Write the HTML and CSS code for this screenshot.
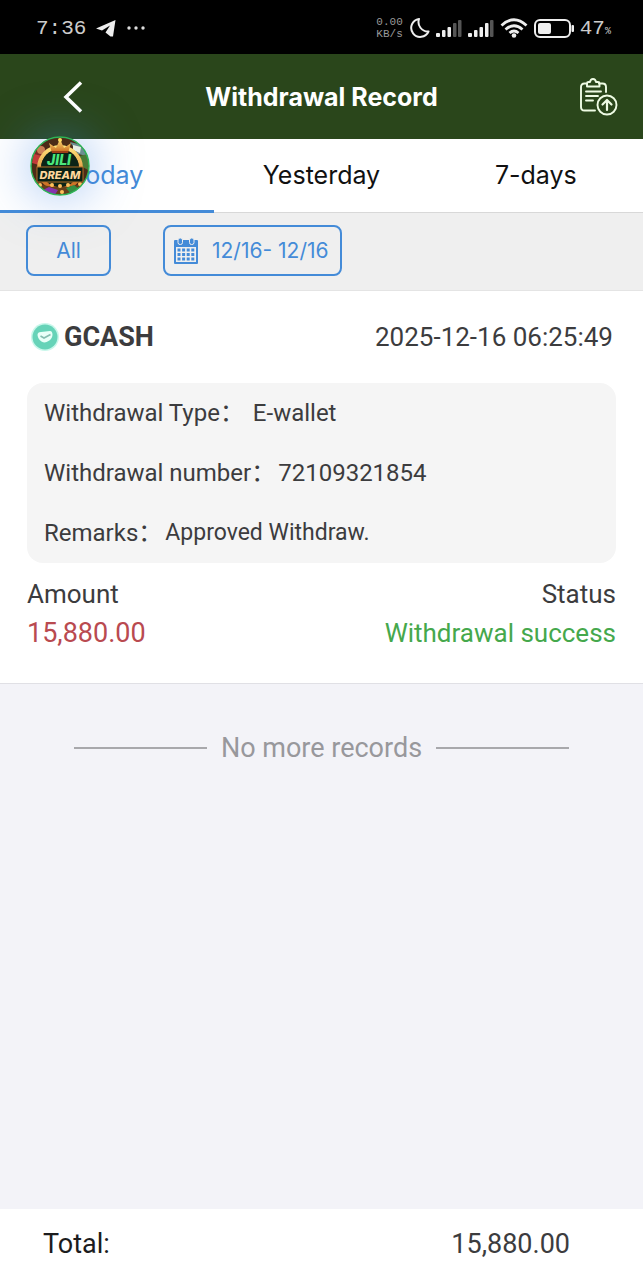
FILE: index.html
```html
<!DOCTYPE html>
<html lang="en">
<head>
    <meta charset="UTF-8">
    <meta name="viewport" content="width=device-width, initial-scale=1.0">
    <title>Withdrawal Record</title>

    <link rel="stylesheet" href="styles.css">

</head>
<body>
    <!-- Status bar -->
    <div class="status">
        <div class="status-side">
            <span class="status-time">7:36</span>
            <svg width="20" height="18" viewBox="0 0 20 18">
                <path d="M0 9.500 19.500 1 17 17.500 14.500 17.500 9.500 13.500 14 6.500 6 11.500Z" fill="#eee"/>
            </svg>
            <svg width="20" height="6" viewBox="0 0 20 6" fill="#ddd">
                <circle cx="3" cy="3" r="1.700"/>
                <circle cx="10" cy="3" r="1.700"/>
                <circle cx="17" cy="3" r="1.700"/>
            </svg>
        </div>
        <div class="status-side status-right">
            <span class="status-net">0.00<br>KB/s</span>
            <svg width="21" height="22" viewBox="0 0 21 22">
                <path d="M10 2A9 9 0 1 0 19.500 14.500 9.500 9.500 0 0 1 10 2Z" fill="none" stroke="#eee" stroke-width="2" stroke-linejoin="round"/>
            </svg>
            <svg width="26" height="18" viewBox="0 0 26 18" fill="#eee">
                <rect y="14" width="4" height="4" rx="1"/>
                <rect x="6" y="11" width="3.500" height="7" rx="1"/>
                <rect x="11.500" y="8" width="3.500" height="10" rx="1"/>
                <rect x="17" y="4" width="3.500" height="14" rx="1" fill="#555"/>
                <rect x="22" y="1" width="3.500" height="17" rx="1" fill="#555"/>
            </svg>
            <svg width="26" height="18" viewBox="0 0 26 18" fill="#eee">
                <rect y="14" width="4" height="4" rx="1"/>
                <rect x="6" y="11" width="3.500" height="7" rx="1"/>
                <rect x="11.500" y="8" width="3.500" height="10" rx="1"/>
                <rect x="17" y="4" width="3.500" height="14" rx="1"/>
                <rect x="22" y="1" width="3.500" height="17" rx="1" fill="#555"/>
            </svg>
            <svg width="28" height="20" viewBox="0 0 28 20" fill="none" stroke="#eee" stroke-width="2.800">
                <path d="M1.500 7.500Q14-4 26.500 7.500M5.500 11.500Q14 4 22.500 11.500M9.500 15Q14 11 18.500 15"/>
                <circle cx="14" cy="17.500" r="2.300" fill="#eee" stroke="none"/>
            </svg>
            <svg width="40" height="19" viewBox="0 0 40 19">
                <rect x="1" y="1" width="35" height="17" rx="5" fill="none" stroke="#eee" stroke-width="2"/>
                <rect x="4" y="4" width="13" height="11" rx="2" fill="#eee"/>
                <rect x="37.500" y="6" width="2.500" height="7" rx="1" fill="#eee"/>
            </svg>
            <span class="status-time">47<small>%</small></span>
        </div>
    </div>

    <header class="header">
        <button class="back" type="button" aria-label="Back">
            <svg width="20" height="32" viewBox="0 0 20 32">
                <path d="M18 1.500 3 16 18 30.500" fill="none" stroke="#fff" stroke-width="3.500"/>
            </svg>
        </button>
        <h1>Withdrawal Record</h1>
        <button class="export" type="button" aria-label="Export record">
            <svg width="39" height="38" viewBox="0 0 39 38" fill="none" stroke="#eefbe4" stroke-width="1.900" stroke-linecap="round" stroke-linejoin="round">
                <path d="M8 5.500H5.500Q2 5.500 2 9V29Q2 32.500 5.500 32.500H16M20 5.500H23.500Q27 5.500 27 9V14"/>
                <path d="M8 8.500V5.500Q8 4 9.500 4H11Q11.500 1 14 1T17 4H19Q20.500 4 20.500 5.500V8.500Z"/>
                <path d="M7 13.500H22M7 18H19M7 22.500H14"/>
                <circle cx="28" cy="27" r="9.500"/>
                <path d="M28 32V22.500M23.500 26.500 28 22 32.500 26.500" stroke-width="2.200"/>
            </svg>
        </button>
    </header>

    <nav class="tabs">
        <button class="tab active" type="button">Today</button>
        <button class="tab" type="button">Yesterday</button>
        <button class="tab" type="button">7-days</button>
    </nav>

    <section class="filters">
        <button class="chip chip-all" type="button">All</button>
        <button class="chip chip-date" type="button">
            <svg width="24" height="26" viewBox="0 0 24 26">
                <rect y="2" width="24" height="24" rx="1" fill="#448bd8"/>
                <path d="M2 9H22V24H2Z" fill="#efefef"/>
                <path d="M3.500 12H21M3.500 16.500H21M3.500 21H21" stroke="#448bd8" stroke-width="3" stroke-dasharray="3 1.600"/>
                <rect x="4" y="0" width="4.500" height="6.500" rx="2" fill="#448bd8" stroke="#efefef"/>
                <rect x="15.500" y="0" width="4.500" height="6.500" rx="2" fill="#448bd8" stroke="#efefef"/>
            </svg>
            <span>12/16- 12/16</span>
        </button>
    </section>

    <main>
        <article class="record">
            <div class="record-head">
                <h2>
                    <svg width="30" height="30" viewBox="0 0 30 30">
                        <circle cx="15" cy="15" r="14" fill="#c9f7eb"/>
                        <circle cx="15" cy="15" r="12.500" fill="#66d3b8"/>
                        <path d="M7.500 13Q7.500 10 11 10L20 9Q22.500 9 22.500 13 22 17 18.500 19 15 21.500 11.500 19.500 8 17 7.500 13Z" fill="#e9fff8"/>
                        <path d="M10.500 14 14 16 20.500 12.500" fill="none" stroke="#86bdb0" stroke-width="1.600"/>
                    </svg>
                    GCASH
                </h2>
                <time>2025-12-16 06:25:49</time>
            </div>
            <dl class="details">
                <div class="detail"><dt>Withdrawal Type：</dt><dd>&nbsp;E-wallet</dd></div>
                <div class="detail"><dt>Withdrawal number：</dt><dd>72109321854</dd></div>
                <div class="detail"><dt>Remarks：</dt><dd class="remark">Approved Withdraw.</dd></div>
            </dl>
            <div class="result">
                <div>
                    <p>Amount</p>
                    <p class="amount">15,880.00</p>
                </div>
                <div class="result-status">
                    <p>Status</p>
                    <p class="success">Withdrawal success</p>
                </div>
            </div>
        </article>

        <p class="no-more">No more records</p>
    </main>

    <footer class="footer">
        <span class="total">Total:</span>
        <span>15,880.00</span>
    </footer>

    <!-- Floating game logo -->
    <a class="floating-logo" href="#" aria-label="Jili Dream">
        <svg width="60" height="60" viewBox="0 0 60 60">
            <defs>
                <clipPath id="round"><circle cx="30" cy="30" r="29"/></clipPath>
                <linearGradient id="gold" x2="0" y2="1">
                    <stop offset="0" stop-color="#ffe27a"/>
                    <stop offset="1" stop-color="#c8641a"/>
                </linearGradient>
            </defs>
            <g clip-path="url(#round)">
                <rect width="60" height="60" fill="#4c2b17"/>
                <path d="M0 22 8 6 16 14 9 30Z" fill="#7d2a25"/>
                <circle cx="11" cy="14" r="4" fill="#c98055"/>
                <path d="M4 18 12 20 9 29 2 27Z" fill="#c23b3a"/>
                <path d="M40 6 52 9 57 20 48 18Z" fill="#6b8f91"/>
                <path d="M43 9 51 11 50 17 43 14Z" fill="#e8eee5"/>
                <path d="M49 20 58 18V34L51 30Z" fill="#4c7a35"/>
                <circle cx="30" cy="32" r="21" fill="none" stroke="url(#gold)" stroke-width="4"/>
                <circle cx="30" cy="32" r="19" fill="#0c2417"/>
                <path d="M22 17 19 7 26 12 30 3 34 12 41 7 38 17Z" fill="url(#gold)"/>
                <circle cx="30" cy="4" r="2" fill="#ffdc60"/>
                <path d="M22 16H38" stroke="#9f3e17" stroke-width="2"/>
                <path d="M2 46Q30 56 58 46V60H2Z" fill="#66401a"/>
                <path d="M13 54 19 51 28 54 24 60H14Z" fill="#8534ad"/>
                <path d="M36 52 44 49 49 53 41 58Z" fill="#348f43"/>
                <g fill="#ffc05a">
                    <circle cx="10" cy="49" r="2"/>
                    <circle cx="22" cy="49" r="2"/>
                    <circle cx="30" cy="50" r="2"/>
                    <circle cx="38" cy="49" r="2"/>
                    <circle cx="50" cy="48" r="2"/>
                    <circle cx="32" cy="56" r="2"/>
                </g>
                <rect x="7" y="31" width="46" height="15" fill="#092015" stroke="#b16f28"/>
            </g>
            <circle cx="30" cy="30" r="29" fill="none" stroke="#2fb35a" stroke-width="1.500"/>
            <text class="logo-jili" x="29" y="29" text-anchor="middle">JILI</text>
            <text class="logo-dream" x="30" y="43" text-anchor="middle">DREAM</text>
        </svg>
    </a>
</body>
</html>
```

FILE: styles.css
```css
html{
    box-sizing: border-box;
    font-family: Roboto, "Noto Sans CJK SC", sans-serif;
    font-size: 16px;
}

*, *::after, *::before{
    box-sizing: inherit;
}

body{
    position: relative;
    display: flex;
    flex-direction: column;
    min-height: 100vh;
    margin: 0;
    color: #3c3c3e;
    background-color: #f3f3f8;
}

h1, h2, p, dl, dd{
    margin: 0;
}

button{
    padding: 0;
    border: 0;
    background: none;
    font-family: Inter, sans-serif;
    cursor: pointer;
}

svg{
    display: block;
    flex-shrink: 0;
}

main{
    flex-grow: 1;
}

/* Status bar */
.status{
    display: flex;
    justify-content: space-between;
    align-items: center;
    height: 54px;
    padding: 2px 32px 0 36px;
    color: #ccc;
    background-color: #000;
    font-family: "Liberation Mono", monospace;
}

.status-side{
    display: flex;
    align-items: center;
    gap: 10px;
}

.status-right{
    gap: 6px;
}

.status-time{
    font-size: 21px;
}

.status-time small{
    font-size: 10px;
}

.status-net{
    font-size: 11px;
    line-height: 12px;
    color: #999;
}

/* Header */
.header{
    display: grid;
    grid-template-columns: 1fr auto 1fr;
    align-items: center;
    height: 85px;
    padding: 0 25px;
    color: #fff;
    background-color: #2a461b;
}

.header h1{
    font-family: Inter, sans-serif;
    font-size: 25px;
    font-weight: 700;
}

.back{
    justify-self: start;
    margin-left: 38px;
}

.export{
    justify-self: end;
}

/* Tabs */
.tabs{
    display: flex;
    height: 74px;
    border-bottom: 1px solid #d8d8d8;
    background-color: #fff;
}

.tab{
    flex: 1;
    margin-bottom: -1px;
    border-bottom: 3px solid transparent;
    font-size: 25px;
    color: #111;
}

.tab.active{
    color: #448bd8;
    border-color: #448bd8;
}

/* Filters */
.filters{
    display: flex;
    gap: 52px;
    padding: 12px 26px 14px;
    border-bottom: 1px solid #e4e4e4;
    background-color: #efefef;
}

.chip{
    display: flex;
    justify-content: center;
    align-items: center;
    gap: 14px;
    height: 51px;
    border: 2px solid #448bd8;
    border-radius: 8px;
    font-size: 21px;
    color: #448bd8;
}

.chip-all{
    width: 85px;
}

.chip-date{
    padding: 0 11px 0 9px;
}

/* Record */
.record{
    padding: 0 27px 30px;
    border-bottom: 1px solid #e0e0e5;
    background-color: #fff;
}

.record-head{
    display: flex;
    justify-content: space-between;
    align-items: center;
    height: 92px;
    padding: 0 3px;
    font-size: 26px;
}

.record-head h2{
    display: flex;
    align-items: center;
    gap: 4px;
    font-size: 27px;
    font-weight: 700;
}

.details{
    border-radius: 16px;
    padding: 0 17px;
    background-color: #f5f5f5;
    font-size: 24px;
    line-height: 60px;
}

.detail{
    display: flex;
    gap: 3px;
}

.remark{
    font-size: 23px;
}

.result{
    display: flex;
    justify-content: space-between;
    padding-top: 12px;
    font-size: 26px;
    line-height: 39px;
}

.result-status{
    text-align: right;
}

.amount{
    font-size: 27px;
    color: #b94a50;
}

.success{
    color: #45a84c;
}

.no-more{
    display: flex;
    align-items: center;
    gap: 14px;
    padding: 44px 74px;
    font-size: 27px;
    line-height: 40px;
    color: #98989c;
}

.no-more::before, .no-more::after{
    content: "";
    flex: 1;
    height: 2px;
    background-color: #a8a8ac;
}

/* Footer */
.footer{
    display: flex;
    justify-content: space-between;
    align-items: center;
    height: 71px;
    padding: 0 73px 2px 43px;
    background-color: #fff;
    font-size: 27px;
}

.total{
    color: #1c1c1e;
}

/* Floating logo */
.floating-logo{
    position: absolute;
    top: 136px;
    left: 30px;
    border-radius: 50%;
    box-shadow: 0 0 50px rgba(60, 130, 230, .5);
}

.logo-jili, .logo-dream{
    font-family: Inter, sans-serif;
    font-style: italic;
    font-weight: 800;
}

.logo-jili{
    font-size: 14px;
    fill: #4be77c;
}

.logo-dream{
    font-size: 11px;
    fill: #ffd79c;
}
```
